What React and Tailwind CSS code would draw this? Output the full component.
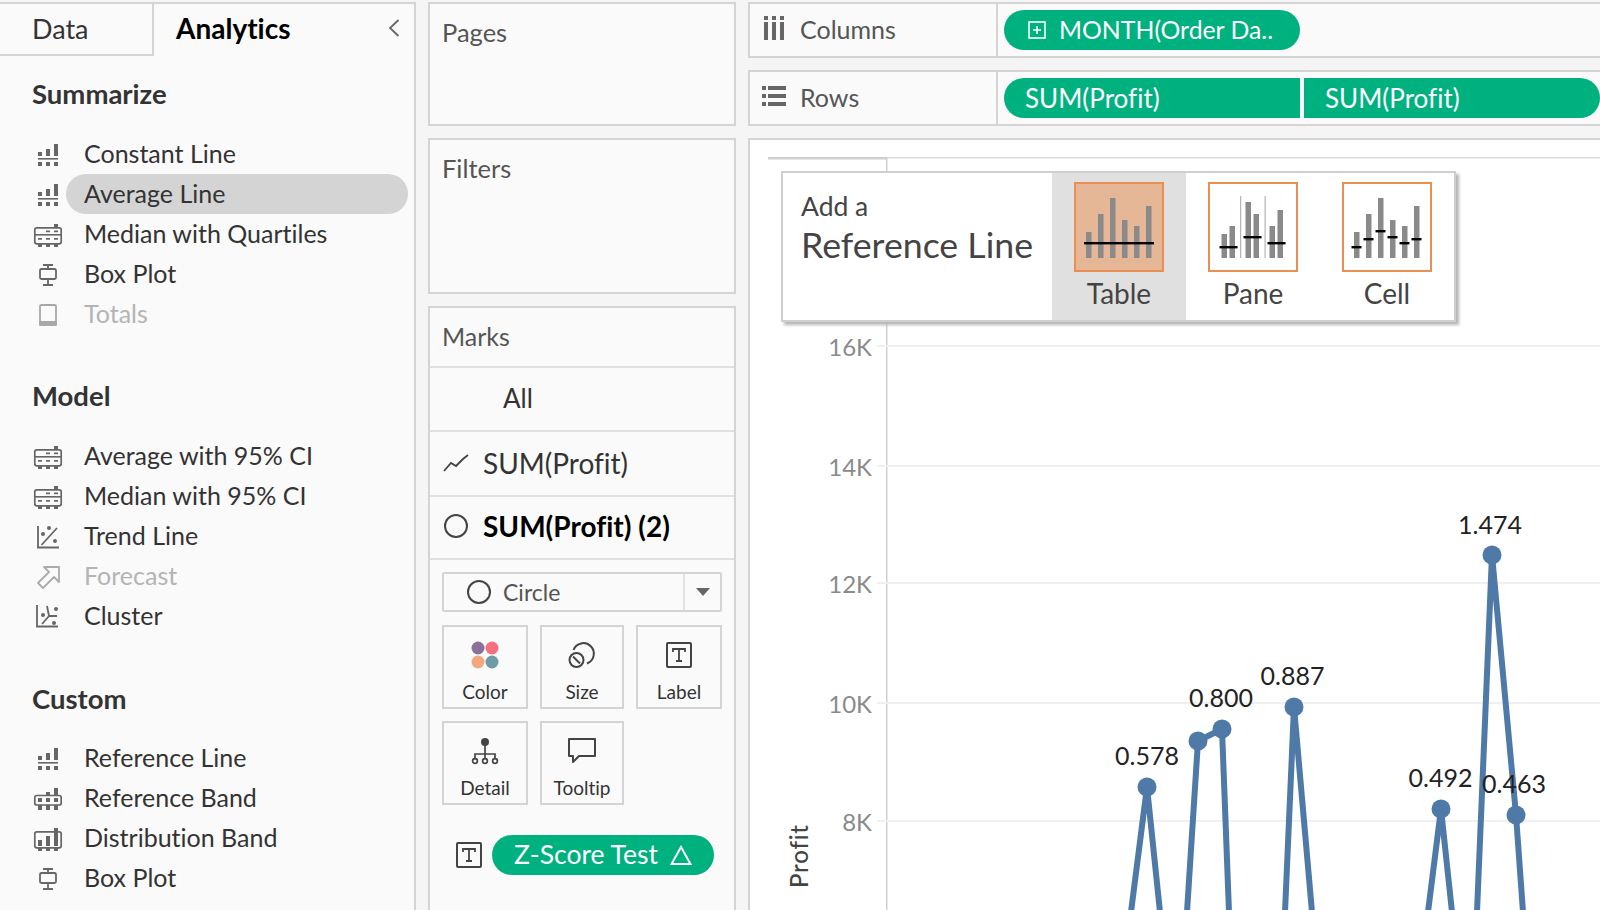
const C = '#666666';

function Svg({ children, color = C }) {
  return (
    <svg viewBox="0 0 36 30" width="36" height="30" fill={color} stroke="none" className="block">
      {children}
    </svg>
  );
}

const Feet = ({ y, h = 4 }) => (
  <>
    <rect x="8" y={y} width="4" height={h} />
    <rect x="16" y={y} width="4" height={h} />
    <rect x="24" y={y} width="4" height={h} />
  </>
);

const LineIcon = () => (
  <Svg>
    <rect x="8" y="13" width="4" height="4" />
    <rect x="16" y="10" width="4" height="7" />
    <rect x="24" y="5" width="4" height="12" />
    <rect x="8" y="19" width="20" height="1.6" />
    <Feet y={23} />
  </Svg>
);

const QuartileIcon = () => (
  <Svg>
    <rect x="4.8" y="8.8" width="26.4" height="16" rx="2" fill="none" stroke={C} strokeWidth="1.7" />
    <rect x="24" y="5" width="4" height="4" />
    <rect x="16" y="11.5" width="4" height="1.7" />
    <rect x="24" y="11.5" width="4" height="1.7" />
    <rect x="4" y="15" width="28" height="1.6" />
    <rect x="8" y="19" width="4" height="1.7" />
    <rect x="16" y="19" width="4" height="1.7" />
    <rect x="24" y="19" width="4" height="1.7" />
    <Feet y={25} h={3} />
  </Svg>
);

const BoxIcon = () => (
  <Svg>
    <g fill="none" stroke={C} strokeWidth="1.8">
      <path d="M13 6h10M13 26h10M18 6v4M18 20v6" />
      <rect x="10" y="10" width="16" height="10" rx="1.5" />
    </g>
  </Svg>
);

const TotalsIcon = () => (
  <Svg color="#a8a8a8">
    <rect x="10" y="6" width="16" height="20" rx="1.5" fill="none" stroke="#a8a8a8" strokeWidth="1.8" />
    <rect x="9" y="22" width="18" height="5" rx="1.5" />
  </Svg>
);

const TrendIcon = () => (
  <Svg>
    <path d="M8 5v21.5h21M11.5 24L27 7" fill="none" stroke={C} strokeWidth="1.8" />
    <circle cx="13" cy="13" r="2" />
    <circle cx="19" cy="7" r="2" />
    <circle cx="25" cy="20" r="2" />
  </Svg>
);

const ForecastIcon = () => (
  <Svg>
    <path d="M14 6H29V21L24 16L13 27L8 22L19 11Z" fill="none" stroke="#ababab" strokeWidth="1.8" strokeLinejoin="round" />
  </Svg>
);

const ClusterIcon = () => (
  <Svg>
    <path d="M7 4v21.5h21M12 23L19 15L17 5M19 15L27 15" fill="none" stroke={C} strokeWidth="1.8" />
    <circle cx="13" cy="14" r="2" />
    <circle cx="26" cy="8" r="2" />
    <circle cx="24" cy="22" r="2" />
  </Svg>
);

const BandIcon = () => (
  <Svg>
    <rect x="4.8" y="12.5" width="26.4" height="9.5" rx="2" fill="none" stroke={C} strokeWidth="1.7" />
    <rect x="24" y="5" width="4" height="8" />
    <rect x="16" y="9" width="4" height="4" />
    <Feet y={15} />
    <Feet y={22} h={5} />
  </Svg>
);

const DistIcon = () => (
  <Svg>
    <rect x="4.8" y="8.8" width="26.4" height="16" rx="2" fill="none" stroke={C} strokeWidth="1.7" />
    <rect x="8" y="17" width="4" height="6" />
    <rect x="16" y="13" width="4" height="10" />
    <rect x="24" y="9" width="4" height="14" />
    <rect x="24" y="5" width="4" height="4" />
    <Feet y={25} h={3} />
  </Svg>
);

const sections = [
  {
    title: 'Summarize', cls: 'mt-[21px]', listCls: 'mt-[23px]',
    items: [
      { label: 'Constant Line', Icon: LineIcon },
      { label: 'Average Line', Icon: LineIcon, active: true },
      { label: 'Median with Quartiles', Icon: QuartileIcon },
      { label: 'Box Plot', Icon: BoxIcon },
      { label: 'Totals', Icon: TotalsIcon, off: true },
    ],
  },
  {
    title: 'Model', cls: 'mt-[45px]', listCls: 'mt-[23px]',
    items: [
      { label: 'Average with 95% CI', Icon: QuartileIcon },
      { label: 'Median with 95% CI', Icon: QuartileIcon },
      { label: 'Trend Line', Icon: TrendIcon },
      { label: 'Forecast', Icon: ForecastIcon, off: true },
      { label: 'Cluster', Icon: ClusterIcon },
    ],
  },
  {
    title: 'Custom', cls: 'mt-[46px]', listCls: 'mt-[22px]',
    items: [
      { label: 'Reference Line', Icon: LineIcon },
      { label: 'Reference Band', Icon: BandIcon },
      { label: 'Distribution Band', Icon: DistIcon },
      { label: 'Box Plot', Icon: BoxIcon },
    ],
  },
];

function Sidebar() {
  return (
    <div className="w-[416px] shrink-0 mt-[2px] border-t-2 border-r-2 border-[#d4d4d4] bg-[#fafafa]">
      <div className="flex h-[52px]">
        <div className="w-[154px] border-r-2 border-b-2 border-[#d4d4d4] pl-[32px] flex items-center text-[27px] text-[#333]">Data</div>
        <div className="flex-1 pl-[22px] pb-[4px] flex items-center justify-between pr-[14px] text-[28px] font-bold text-black">
          Analytics
          <svg viewBox="0 0 12 18" width="12" height="18" className="block" fill="none" stroke="#666" strokeWidth="1.8">
            <path d="M10.5 1L2 9l8.5 8" />
          </svg>
        </div>
      </div>
      {sections.map(s => (
        <div key={s.title} className={s.cls}>
          <div className="h-[34px] pl-[32px] flex items-center text-[27.5px] font-bold text-[#333]">{s.title}</div>
          <div className={s.listCls}>
            {s.items.map(it => (
              <div key={it.label} className="h-10 flex items-center pl-[30px]">
                <div className="w-9 shrink-0"><it.Icon /></div>
                <div className={`flex-1 h-full mr-[6px] pl-[18px] flex items-center rounded-full text-[25px] ${it.active ? 'bg-[#d4d4d4]' : ''} ${it.off ? 'text-[#b4b4b4]' : 'text-[#333]'}`}>
                  {it.label}
                </div>
              </div>
            ))}
          </div>
        </div>
      ))}
    </div>
  );
}

const TIcon = () => (
  <svg viewBox="0 0 26 26" width="26" height="26" className="block">
    <rect x="1" y="1" width="24" height="24" rx="1" fill="none" stroke="#444" strokeWidth="2" />
    <path d="M7 10V7h12v3M13 7v12M10 19h6" fill="none" stroke="#444" strokeWidth="1.8" />
  </svg>
);

const cards = [
  {
    label: 'Color',
    icon: (
      <svg viewBox="0 0 30 30" width="30" height="30" className="block">
        <circle cx="8" cy="8" r="6.5" fill="#8a7199" />
        <circle cx="22" cy="8" r="6.5" fill="#f5717f" />
        <circle cx="8" cy="22" r="6.5" fill="#f3a77f" />
        <circle cx="22" cy="22" r="6.5" fill="#6f9aa8" />
      </svg>
    ),
  },
  {
    label: 'Size',
    icon: (
      <svg viewBox="0 0 30 30" width="30" height="30" className="block" fill="none" stroke="#444" strokeWidth="2">
        <path d="M6.5 10A10.5 10.5 0 1 1 20 23.5" />
        <circle cx="9.5" cy="20" r="7" />
        <path d="M6 16.5l7 7" />
      </svg>
    ),
  },
  { label: 'Label', icon: <TIcon /> },
  {
    label: 'Detail',
    icon: (
      <svg viewBox="0 0 30 30" width="30" height="30" className="block" fill="none" stroke="#444" strokeWidth="1.7">
        <circle cx="15" cy="6" r="4" fill="#444" stroke="none" />
        <path d="M15 9v9M5 22v-4h20v4M15 18v4" />
        <circle cx="5" cy="25" r="2.4" />
        <circle cx="15" cy="25" r="2.4" />
        <circle cx="25" cy="25" r="2.4" />
      </svg>
    ),
  },
  {
    label: 'Tooltip',
    icon: (
      <svg viewBox="0 0 30 30" width="30" height="30" className="block" fill="none" stroke="#444" strokeWidth="2">
        <path d="M2 3h26v17H12l-6 6v-6H2z" strokeLinejoin="round" />
      </svg>
    ),
  },
];

function Panel({ title, cls }) {
  return (
    <div className={`border-2 border-[#d4d4d4] bg-[#fafafa] pl-[12px] pt-[9px] text-[25.5px] text-[#555] ${cls}`}>{title}</div>
  );
}

function MarkRow({ h, children, cls = '' }) {
  return <div className={`flex items-center border-b-2 border-[#e0e0e0] ${h} ${cls}`}>{children}</div>;
}

function MiddleColumn() {
  return (
    <div className="w-[308px] shrink-0 ml-[12px] mt-[2px] flex flex-col gap-[12px] h-[908px]">
      <Panel title="Pages" cls="h-[124px]" />
      <Panel title="Filters" cls="h-[156px]" />
      <div className="flex-1 border-x-2 border-t-2 border-[#d4d4d4] bg-[#fafafa]">
        <MarkRow h="h-[60px]" cls="pl-[12px] text-[25px] text-[#555]">Marks</MarkRow>
        <MarkRow h="h-[64px]" cls="pl-[73px] pb-[2px] text-[26px] text-[#333]">All</MarkRow>
        <MarkRow h="h-[65px]" cls="pl-[13px] pb-[2px] text-[28px] text-[#333]">
          <svg viewBox="0 0 26 20" width="26" height="20" className="block mr-[14px]" fill="none" stroke="#444" strokeWidth="1.8">
            <path d="M1 18L8 10L13 13L20 6L25 2" />
          </svg>
          SUM(Profit)
        </MarkRow>
        <MarkRow h="h-[63px]" cls="pl-[13px] pb-[4px] text-[28px] font-bold text-black">
          <svg viewBox="0 0 26 26" width="26" height="26" className="block mr-[14px]" fill="none" stroke="#444" strokeWidth="2">
            <circle cx="13" cy="13" r="11" />
          </svg>
          SUM(Profit) (2)
        </MarkRow>
        <div className="ml-[12px] mt-[12px] w-[280px]">
          <div className="h-10 flex items-center border-2 border-[#d4d4d4] rounded-[2px]">
            <div className="flex-1 h-full flex items-center pl-[22px] text-[23px] text-[#555] border-r-2 border-[#e0e0e0]">
              <svg viewBox="0 0 26 26" width="26" height="26" className="block mr-[11px]" fill="none" stroke="#444" strokeWidth="2">
                <circle cx="13" cy="13" r="11" />
              </svg>
              Circle
            </div>
            <div className="w-[35px] flex justify-center">
              <svg viewBox="0 0 14 8" width="14" height="8" className="block"><path d="M0 0h14L7 8z" fill="#666" /></svg>
            </div>
          </div>
          <div className="mt-[13px] grid grid-cols-[86px_84px_86px] gap-x-3 gap-y-[12px]">
            {cards.map(c => (
              <div key={c.label} className="h-[84px] border-2 border-[#d4d4d4] flex flex-col items-center pt-[13px] text-[19px] text-[#333]">
                <div className="h-[30px] flex items-center">{c.icon}</div>
                <span className="mt-[10px] leading-[24px]">{c.label}</span>
              </div>
            ))}
          </div>
        </div>
        <div className="mt-[30px] ml-[26px] flex items-center">
          <TIcon />
          <div className="ml-[10px] w-[222px] h-10 rounded-full bg-[#00b180] text-white text-[26.5px] flex items-center justify-center">
            Z-Score Test
            <svg viewBox="0 0 22 20" width="22" height="20" className="block ml-[12px]" fill="none" stroke="#fff" strokeWidth="2">
              <path d="M11 2L20.5 19H1.5z" />
            </svg>
          </div>
        </div>
      </div>
    </div>
  );
}

function ColumnsIcon() {
  return (
    <svg viewBox="0 0 20 24" width="20" height="24" className="block ml-[14px] mb-[4px]" fill={C}>
      <rect x="0" y="0" width="4" height="4" />
      <rect x="8" y="0" width="4" height="4" />
      <rect x="16" y="0" width="4" height="4" />
      <rect x="0" y="6" width="4" height="18" />
      <rect x="8" y="6" width="4" height="18" />
      <rect x="16" y="6" width="4" height="18" />
    </svg>
  );
}

function RowsIcon() {
  return (
    <svg viewBox="0 0 24 20" width="24" height="20" className="block ml-[12px] mb-[4px]" fill={C}>
      <rect x="0" y="0" width="4" height="4" />
      <rect x="6" y="0" width="18" height="4" />
      <rect x="0" y="8" width="4" height="4" />
      <rect x="6" y="8" width="18" height="4" />
      <rect x="0" y="16" width="4" height="4" />
      <rect x="6" y="16" width="18" height="4" />
    </svg>
  );
}

function Shelf({ icon, label, children }) {
  return (
    <div className="flex h-[56px] border-y-2 border-l-2 border-[#d4d4d4] bg-[#fafafa]">
      <div className="w-[248px] shrink-0 border-r-2 border-[#d4d4d4] flex items-center text-[25px] text-[#555]">
        <div className="w-[50px] shrink-0">{icon}</div>
        {label}
      </div>
      <div className="flex-1 flex items-center pl-[6px] gap-[4px] text-white">{children}</div>
    </div>
  );
}

function Bars({ bars, w = 5.5 }) {
  return bars.map(([x, top], i) => <rect key={i} x={x} y={top} width={w} height={76 - top} fill="#8a8a8a" />);
}

const tableBars = [[12, 50], [24, 32], [36, 16], [48, 38], [60, 44], [72, 24]];

const options = [
  {
    label: 'Table', on: true,
    draw: (
      <>
        <Bars bars={tableBars} />
        <rect x="10" y="60" width="70" height="2.4" fill="#000" />
      </>
    ),
  },
  {
    label: 'Pane',
    draw: (
      <>
        <rect x="32" y="14" width="1.2" height="62" fill="#b5b5b5" />
        <rect x="56.5" y="14" width="1.2" height="62" fill="#b5b5b5" />
        <Bars bars={[[13.5, 52], [21.5, 44], [37.5, 20], [45.5, 32], [61.5, 44], [69.5, 28]]} />
        <rect x="11.5" y="64" width="18" height="2.4" fill="#000" />
        <rect x="35.5" y="54" width="18" height="2.4" fill="#000" />
        <rect x="59.5" y="60" width="18" height="2.4" fill="#000" />
      </>
    ),
  },
  {
    label: 'Cell',
    draw: (
      <>
        <Bars bars={tableBars} />
        <rect x="9.5" y="64" width="10" height="2.4" fill="#000" />
        <rect x="21.5" y="56" width="10" height="2.4" fill="#000" />
        <rect x="33.5" y="48" width="10" height="2.4" fill="#000" />
        <rect x="45.5" y="54" width="10" height="2.4" fill="#000" />
        <rect x="57.5" y="60" width="10" height="2.4" fill="#000" />
        <rect x="69.5" y="56" width="10" height="2.4" fill="#000" />
      </>
    ),
  },
];

function RefLinePopup() {
  return (
    <div className="absolute left-[31px] top-[31px] w-[675px] h-[151px] bg-white border-2 border-[#cfcfcf] shadow-[3px_3px_3px_#b5b5b5] flex">
      <div className="w-[269px] pl-[18px] pt-[15px] text-[#444]">
        <div className="text-[26.5px] leading-[36px]">Add a</div>
        <div className="text-[35.7px] leading-[42px]">Reference Line</div>
      </div>
      {options.map(o => (
        <div key={o.label} className={`w-[134px] flex flex-col items-center pt-[9px] ${o.on ? 'bg-[#e0e0e0]' : ''}`}>
          <svg viewBox="0 0 90 90" width="90" height="90" className="block">
            <rect x="1" y="1" width="88" height="88" fill={o.on ? '#e5b797' : '#fff'} stroke="#e98f52" strokeWidth="2" />
            {o.draw}
          </svg>
          <div className="mt-[3px] text-[28px] leading-[36px] text-[#444]">{o.label}</div>
        </div>
      ))}
    </div>
  );
}

const ticks = [['16K', 346], ['14K', 466], ['12K', 583], ['10K', 703], ['8K', 821]];
const runs = [
  '1131,912 1147,787 1160,912',
  '1187,912 1198,741 1222,729 1229,912',
  '1285,912 1294,707 1312,912',
  '1428,912 1441,809 1452,912',
  '1477,912 1492,555 1516,815 1523,912',
];
const points = [[1147, 787], [1198, 741], [1222, 729], [1294, 707], [1441, 809], [1492, 555], [1516, 815]];
const labels = [['0.578', 1147, 765], ['0.800', 1221, 707], ['0.887', 1292.5, 685], ['0.492', 1440.5, 787], ['0.463', 1514, 793], ['1.474', 1490, 534]];

function Chart() {
  return (
    <div className="relative flex-1 border-t-2 border-l-2 border-[#d4d4d4] bg-white">
      <svg viewBox="750 140 850 770" width="850" height="770" className="block">
        <rect x="768" y="157" width="119" height="2.5" fill="#cfcfcf" />
        <rect x="887" y="157" width="713" height="1.5" fill="#dcdcdc" />
        <rect x="886" y="158" width="1.5" height="752" fill="#cfcfcf" />
        {ticks.map(([t, y]) => (
          <g key={t}>
            <rect x="877" y={y - 1} width="723" height="2" fill="#f0f0f0" />
            <text x="872" y={y + 10} textAnchor="end" fontSize="24" fill="#8a8a8a">{t}</text>
          </g>
        ))}
        {runs.map(r => (
          <polyline key={r} points={r} fill="none" stroke="#4f79a7" strokeWidth="6" strokeLinejoin="round" />
        ))}
        {points.map(([x, y]) => <circle key={x} cx={x} cy={y} r="9.5" fill="#4f79a7" />)}
        {labels.map(([t, x, y]) => (
          <text key={t} x={x} y={y} textAnchor="middle" fontSize="25" fill="#222">{t}</text>
        ))}
        <text transform="translate(808 888) rotate(-90)" fontSize="24" fontWeight="500" letterSpacing="0.8" fill="#444">Profit</text>
      </svg>
      <RefLinePopup />
    </div>
  );
}

function RightColumn() {
  return (
    <div className="ml-[12px] mt-[2px] flex-1 min-w-0 flex flex-col gap-[12px] h-[908px]">
      <Shelf icon={<ColumnsIcon />} label="Columns">
        <div className="w-[296px] h-10 rounded-full bg-[#00b180] flex items-center pl-[24px] text-[24.8px]">
          <svg viewBox="0 0 18 18" width="18" height="18" className="block mr-[13px]" fill="none" stroke="#fff" strokeWidth="1.6">
            <rect x="1" y="1" width="16" height="16" />
            <path d="M9 5v8M5 9h8" />
          </svg>
          MONTH(Order Da..
        </div>
      </Shelf>
      <Shelf icon={<RowsIcon />} label="Rows">
        <div className="w-[296px] h-10 rounded-l-full rounded-r-[2px] bg-[#00b180] flex items-center pl-[21px] text-[26px]">SUM(Profit)</div>
        <div className="w-[296px] h-10 rounded-r-full rounded-l-[2px] bg-[#00b180] flex items-center pl-[21px] text-[26px]">SUM(Profit)</div>
      </Shelf>
      <Chart />
    </div>
  );
}

export default function App() {
  return (
    <div className="w-[1600px] h-[910px] overflow-hidden flex bg-[#f5f5f5] font-[Lato,sans-serif] [font-variant-ligatures:none]">
      <Sidebar />
      <MiddleColumn />
      <RightColumn />
    </div>
  );
}
